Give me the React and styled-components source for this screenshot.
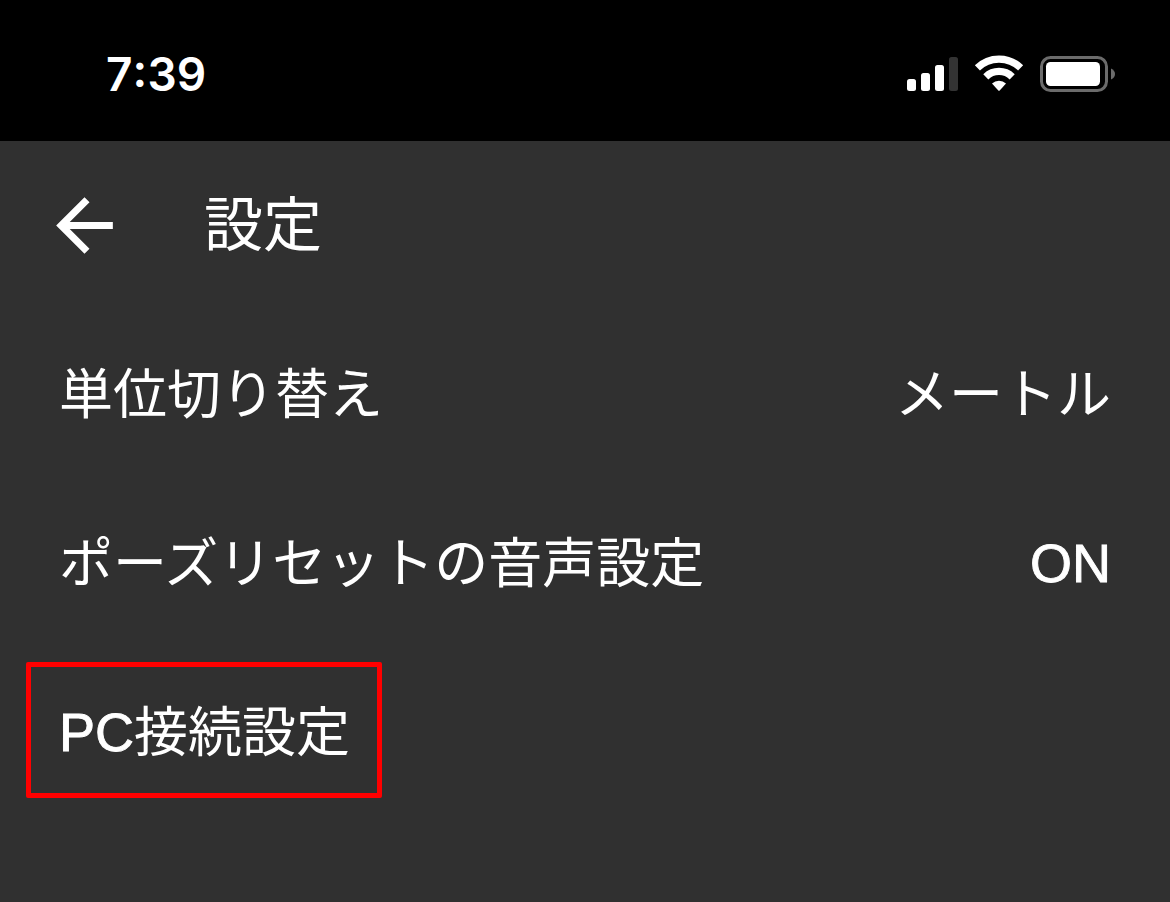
import styled, {createGlobalStyle} from "styled-components";

const App = () => {
    return <>
        <GlobalStyle/>
        <Screen>
            <StatusBar>
                <Time>7<Colon>:</Colon>39</Time>
                <StatusIcons width="210" height="40" viewBox="0 0 210 40">
                    <rect x="2" y="25" width="9" height="12" rx="2.5" fill="#fff"/>
                    <rect x="16" y="19" width="9" height="18" rx="2.5" fill="#fff"/>
                    <rect x="30" y="11" width="9" height="26" rx="2.5" fill="#fff"/>
                    <rect x="44" y="3" width="9" height="34" rx="2.5" fill="#333"/>
                    <g fill="none" stroke="#fff" strokeWidth="7.3">
                        <path d="M72.4 13.8A31 31 0 0 1 115.6 13.8"/>
                        <path d="M80.8 22.8A19 19 0 0 1 107.2 22.8"/>
                    </g>
                    <path d="M87 29.4A10.5 10.5 0 0 1 101 29.4L94.7 36.4Q94 37.1 93.3 36.4Z" fill="#fff"/>
                    <rect x="136.5" y="3.5" width="65" height="33" rx="9" fill="none" stroke="#6b6b6b" strokeWidth="3"/>
                    <rect x="141" y="8" width="54" height="24" rx="4.5" fill="#fff"/>
                    <path d="M206 14.5Q210 16.5 210 20Q210 23.5 206 25.5Z" fill="#6b6b6b"/>
                </StatusIcons>
            </StatusBar>
            <Header>
                <BackButton aria-label="戻る">
                    <svg width="85" height="85" viewBox="0 0 24 24" fill="#fff">
                        <path d="M20 11H7.83l5.59-5.59L12 4l-8 8 8 8 1.41-1.41L7.83 13H20v-2z"/>
                    </svg>
                </BackButton>
                <Title>設定</Title>
            </Header>
            <Row>
                <Label>単位切り替え</Label>
                <Value>メートル</Value>
            </Row>
            <Row>
                <Label>ポーズリセットの音声設定</Label>
                <Value><Latin>ON</Latin></Value>
            </Row>
            <Row>
                <Highlight>
                    <Label><Latin>PC</Latin>接続設定</Label>
                </Highlight>
            </Row>
        </Screen>
    </>
}

const GlobalStyle = createGlobalStyle`
  * {
    box-sizing: border-box;
  }

  body {
    margin: 0;
    background: #303030;
  }
`

const Screen = styled.div`
  height: 902px;
  overflow: hidden;
  background: #303030;
  color: #fff;
  font-family: "Liberation Sans", "Noto Sans CJK JP", sans-serif;
`

const StatusBar = styled.div`
  display: flex;
  justify-content: space-between;
  align-items: flex-start;
  height: 141px;
  padding: 54px 55px 0 106px;
  background: #000;
`

const Time = styled.div`
  font-family: Inter, sans-serif;
  font-size: 46px;
  font-weight: 600;
  line-height: 41px;
  letter-spacing: 0.1px;
`

const Colon = styled.span`
  line-height: 1px;
  vertical-align: 4px;
`

const StatusIcons = styled.svg`
  display: block;
`

const Header = styled.div`
  display: flex;
  align-items: center;
  height: 169px;
  padding-left: 42px;
`

const BackButton = styled.button`
  display: block;
  height: 85px;
  padding: 0;
  border: 0;
  background: none;
  cursor: pointer;

  svg {
    display: block;
  }
`

const Title = styled.h1`
  margin: 0 0 0 77px;
  font-size: 59px;
  font-weight: 400;
  line-height: 80px;
`

const Row = styled.div`
  display: flex;
  justify-content: space-between;
  align-items: center;
  height: 169px;
  padding: 0 59px 0 59px;
  font-size: 54px;
  line-height: 80px;
`

const Label = styled.span`
  white-space: nowrap;
`

const Value = styled.span`
  white-space: nowrap;
`

/* Liberation is thinner than the kana beside it */
const Latin = styled.span`
  vertical-align: 1px;
  -webkit-text-stroke: 0.9px #fff;
`

const Highlight = styled.div`
  display: flex;
  align-items: center;
  width: 356px;
  height: 136px;
  margin: 0 0 6px -33px;
  padding: 5px 0 0 28px;
  border: 5px solid #f00;
  border-radius: 2px;
`

export default App
